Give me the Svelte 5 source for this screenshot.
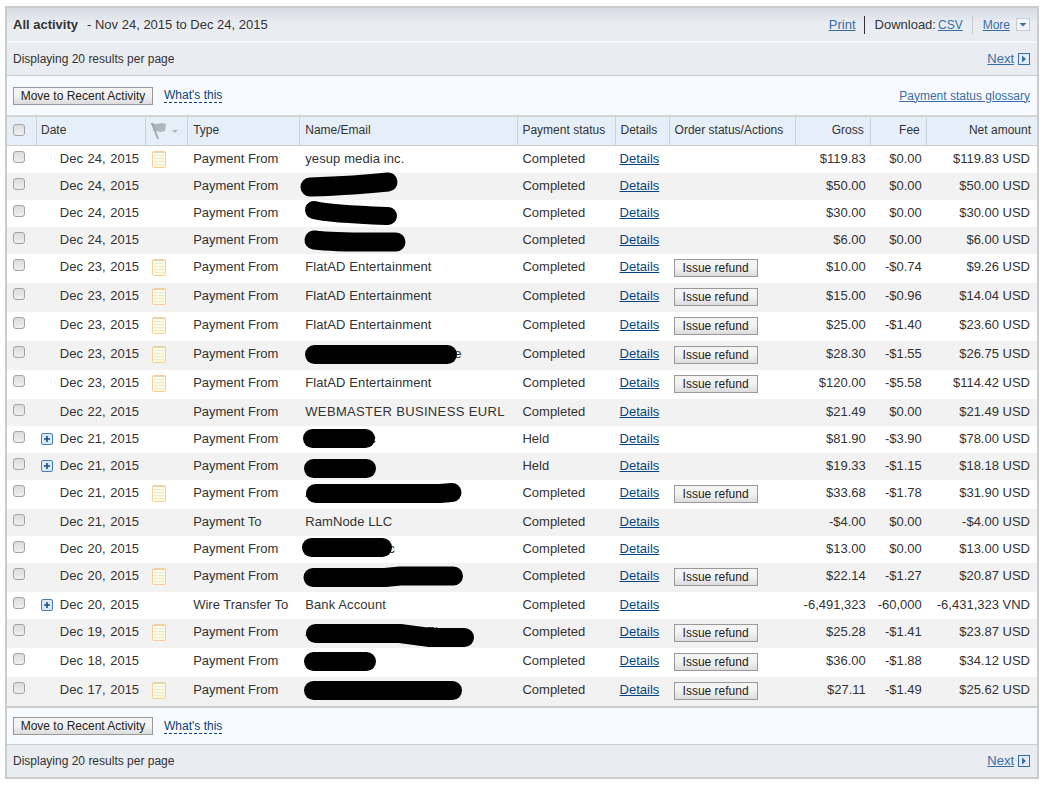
<script>
  const R = (d, t, name, st, ref, g, f, n, o = {}) => ({ d, t, name, st, ref, g, f, n, ...o });
  const F = 'Payment From', C = 'Completed', A = 'FlatAD Entertainment';
  const rows = [
    R('Dec 24, 2015', F, 'yesup media inc.', C, 0, '$119.83', '$0.00', '$119.83 USD', { note: 1 }),
    R('Dec 24, 2015', F, '', C, 0, '$50.00', '$0.00', '$50.00 USD', { blob: 'M10 14 C40 13 70 11 88 9', w: 19 }),
    R('Dec 24, 2015', F, '', C, 0, '$30.00', '$0.00', '$30.00 USD', { blob: 'M14 10 C30 14 60 15 88 16', w: 18 }),
    R('Dec 24, 2015', F, '', C, 0, '$6.00', '$0.00', '$6.00 USD', { blob: 'M14 13 C40 16 70 15 96 15', w: 19 }),
    R('Dec 23, 2015', F, A, C, 1, '$10.00', '-$0.74', '$9.26 USD', { note: 1 }),
    R('Dec 23, 2015', F, A, C, 1, '$15.00', '-$0.96', '$14.04 USD', { note: 1 }),
    R('Dec 23, 2015', F, A, C, 1, '$25.00', '-$1.40', '$23.60 USD', { note: 1 }),
    R('Dec 23, 2015', F, '', C, 1, '$28.30', '-$1.55', '$26.75 USD', { note: 1, blob: 'M14.500 13.500H147.500', w: 19, tail: 'e', tailX: 154 }),
    R('Dec 23, 2015', F, A, C, 1, '$120.00', '-$5.58', '$114.42 USD', { note: 1 }),
    R('Dec 22, 2015', F, 'WEBMASTER BUSINESS EURL', C, 0, '$21.49', '$0.00', '$21.49 USD', { wide: 1 }),
    R('Dec 21, 2015', F, '', 'Held', 0, '$81.90', '-$3.90', '$78.00 USD', { plus: 1, blob: 'M12.500 12.500H65.500', w: 19, tail: 'c', tailX: 69 }),
    R('Dec 21, 2015', F, '', 'Held', 0, '$19.33', '-$1.15', '$18.18 USD', { plus: 1, blob: 'M13.500 15.500H66.500', w: 19 }),
    R('Dec 21, 2015', F, 'A', C, 1, '$33.68', '-$1.78', '$31.90 USD', { note: 1, blob: 'M15.500 13.500H140L152 12.500', w: 19 }),
    R('Dec 21, 2015', 'Payment To', 'RamNode LLC', C, 0, '-$4.00', '$0.00', '-$4.00 USD'),
    R('Dec 20, 2015', F, '', C, 0, '$13.00', '$0.00', '$13.00 USD', { blob: 'M11.500 11.500H82.500', w: 19, tail: 'c', tailX: 88 }),
    R('Dec 20, 2015', F, '', C, 1, '$22.14', '-$1.27', '$20.87 USD', { note: 1, blob: 'M13 14.500H85L100 13H153.500', w: 19 }),
    R('Dec 20, 2015', 'Wire Transfer To', 'Bank Account', C, 0, '-6,491,323', '-60,000', '-6,431,323 VND', { plus: 1 }),
    R('Dec 19, 2015', F, 'A', C, 1, '$25.28', '-$1.41', '$23.87 USD', { note: 1, blob: 'M15.500 14.500H100L130 18.500H164.500', w: 19, tail: 'El', tailX: 126 }),
    R('Dec 18, 2015', F, '', C, 1, '$36.00', '-$1.88', '$34.12 USD', { blob: 'M13.500 13.500H66.500', w: 19 }),
    R('Dec 17, 2015', F, '', C, 1, '$27.11', '-$1.49', '$25.62 USD', { note: 1, blob: 'M13.500 13.500H152.500', w: 19 })
  ];
</script>

{#snippet note()}
  <svg class="note" width="14" height="17" viewBox="0 0 14 17" aria-hidden="true">
    <defs>
      <linearGradient id="notefill" x1="0" y1="0" x2="1" y2="1">
        <stop offset="0" stop-color="#fffef4" />
        <stop offset="1" stop-color="#fdf6d2" />
      </linearGradient>
    </defs>
    <rect x=".5" y=".5" width="13" height="16" rx="1" fill="url(#notefill)" stroke="#f5cf95" />
    <path d="M2 4.500h10M2 7.500h10M2 10.500h10M2 13.500h10" stroke="#e9ebd2" />
    <path d="M1 1.500h12" stroke="#d9d9c8" />
  </svg>
{/snippet}

{#snippet nextIcon()}
  <svg class="next-ico" width="12" height="12" viewBox="0 0 12 12" aria-hidden="true">
    <rect x=".5" y=".5" width="11" height="11" fill="#e4ebf3" stroke="#3a6ea5" />
    <path d="M4 2.500l4 3.500-4 3.500z" fill="#3a6ea5" />
  </svg>
{/snippet}

<div class="panel">
  <div class="bar head">
    <div><b>All activity</b><span class="range">- Nov 24, 2015 to Dec 24, 2015</span></div>
    <div class="tools">
      <a href="#p">Print</a>
      <span class="sep dark"></span>
      <span>Download:</span><a href="#c" class="csv small">CSV</a>
      <span class="sep"></span>
      <a href="#m" class="small">More</a>
      <svg class="more" width="14" height="13" viewBox="0 0 14 13" aria-hidden="true">
        <rect x=".5" y=".5" width="13" height="12" fill="#f2f5f9" stroke="#c4ccd6" />
        <path d="M3.500 5h7L7 8.500z" fill="#3a6ea5" />
      </svg>
    </div>
  </div>
  <div class="bar sub">
    <span class="disp">Displaying 20 results per page</span>
    <span class="next"><a href="#n">Next</a>{@render nextIcon()}</span>
  </div>
  <div class="actions top">
    <button>Move to Recent Activity</button>
    <span class="dashed">What's this</span>
    <a class="gloss" href="#g">Payment status glossary</a>
  </div>

  <table>
    <colgroup>
      <col class="c1" /><col class="c2" /><col class="c3" /><col class="c4" />
      <col class="c5" /><col class="c6" /><col class="c7" /><col class="c8" />
      <col class="c9" /><col class="c10" /><col class="c11" />
    </colgroup>
    <thead>
      <tr>
        <th><span class="cb"></span></th>
        <th class="snug">Date</th>
        <th class="flag">
          <svg width="34" height="20" viewBox="0 0 34 20" aria-hidden="true">
            <path d="M2 2l6 1 4-1 5 1-1 7-5 1-4-1-2 0z" fill="#b0b5ba" />
            <path d="M3 2l6 16" stroke="#a4a9ae" stroke-width="2" />
            <path d="M23 9h6l-3 3z" fill="#b3b3b3" />
          </svg>
        </th>
        <th>Type</th>
        <th>Name/Email</th>
        <th class="snug">Payment status</th>
        <th>Details</th>
        <th>Order status/Actions</th>
        <th class="num">Gross</th>
        <th class="num">Fee</th>
        <th class="num last">Net amount</th>
      </tr>
    </thead>
    <tbody>
      {#each rows as r}
        <tr class:tall={r.ref}>
          <td><span class="cb"></span></td>
          <td class="date">
            {#if r.plus}
              <svg class="plus" width="12" height="12" viewBox="0 0 12 12" aria-hidden="true">
                <rect x=".5" y=".5" width="11" height="11" rx="1.500" fill="#dbe8f5" stroke="#4a7fb5" />
                <path d="M3 6h6M6 3v6" stroke="#1c4f87" stroke-width="1.600" />
              </svg>
            {/if}
            {r.d}
          </td>
          <td class="nt">{#if r.note}{@render note()}{/if}</td>
          <td>{r.t}</td>
          <td class="name" class:wide={r.wide}>
            {r.name}
            {#if r.tail}<span class="tail" style="left:{r.tailX}px">{r.tail}</span>{/if}
            {#if r.blob}
              <svg class="blob" width="180" height="27" viewBox="0 0 180 27" aria-hidden="true">
                <path d={r.blob} fill="none" stroke="#000" stroke-width={r.w} stroke-linecap="round" stroke-linejoin="round" />
              </svg>
            {/if}
          </td>
          <td class="tight">{r.st}</td>
          <td class="tight"><a href="#d">Details</a></td>
          <td class="tight">{#if r.ref}<button class="refund">Issue refund</button>{/if}</td>
          <td class="num">{r.g}</td>
          <td class="num">{r.f}</td>
          <td class="num last">{r.n}</td>
        </tr>
      {/each}
    </tbody>
  </table>

  <div class="actions bottom">
    <button>Move to Recent Activity</button>
    <span class="dashed">What's this</span>
  </div>
  <div class="bar foot">
    <span class="disp">Displaying 20 results per page</span>
    <span class="next"><a href="#n">Next</a>{@render nextIcon()}</span>
  </div>
</div>

<style>
  :global(body) { margin: 0; background: #fff; }
  .panel {
    box-sizing: border-box;
    width: 1034px;
    height: 773px;
    margin: 6px 0 0 5px;
    border: 2px solid #ccc;
    font: 13px/16px "Liberation Sans", Arial, sans-serif;
    color: #333;
    display: flex;
    flex-direction: column;
  }
  a { color: #084482; text-decoration: underline; }
  .bar {
    display: flex;
    justify-content: space-between;
    align-items: center;
    box-sizing: border-box;
    padding: 0 7px 0 6px;
    background: #e9ecf1;
    flex: none;
  }
  .bar a { color: #3a6ea5; }
  .disp { font-size: 12px; }
  .head {
    height: 35px;
    background: linear-gradient(#d6dbe3, #e9ecf1 45%);
    border-bottom: 2px solid #f4f6f8;
  }
  .head b { color: #333; }
  .range { margin-left: 9px; }
  .tools { display: flex; align-items: center; }
  .small { font-size: 12px; }
  .sep { width: 1px; height: 18px; background: #ccc; margin: 0 10px 0 9px; }
  .sep.dark { background: #333; margin-left: 8px; }
  .csv { margin-left: 2px; }
  .more { margin-left: 6px; }
  .sub { height: 33px; border-bottom: 1px solid #ccc; }
  .foot { flex: 1; }
  .next { display: flex; align-items: center; gap: 4px; }
  .actions {
    display: flex;
    align-items: center;
    box-sizing: border-box;
    background: #f7fbff;
    padding: 0 7px 0 6px;
    flex: none;
  }
  .top { height: 41px; border-bottom: 2px solid #d5d5d5; }
  .bottom { height: 39px; border-top: 2px solid #ccc; border-bottom: 1px solid #ccc; }
  button {
    box-sizing: border-box;
    height: 18px;
    width: 140px;
    padding: 0;
    border: 1px solid #999;
    background: linear-gradient(#f4f4f4 45%, #dcdcdc);
    font: 12px/16px "Liberation Sans", Arial, sans-serif;
    color: #222;
  }
  .dashed { margin-left: 11px; color: #084482; font-size: 12px; border-bottom: 1px dashed #084482; line-height: 14px; }
  .gloss { margin-left: auto; font-size: 12px; color: #3a6ea5; }
  table { border-collapse: separate; border-spacing: 0; table-layout: fixed; width: 1030px; flex: none; }
  .c1 { width: 30px; }
  .c2 { width: 109px; }
  .c3 { width: 42px; }
  .c4 { width: 112px; }
  .c5 { width: 218px; }
  .c6 { width: 97px; }
  .c7 { width: 54px; }
  .c8 { width: 126px; }
  .c9 { width: 75px; }
  .c10 { width: 56px; }
  .c11 { width: 110px; }
  th {
    height: 29px;
    padding: 0 0 3px 5px;
    box-sizing: border-box;
    background: #e6eef8;
    font: 12px/16px "Liberation Sans", Arial, sans-serif;
    color: #333;
    text-align: left;
    border-right: 1px solid #ccd3dc;
    border-bottom: 1px solid #ccc;
    white-space: nowrap;
  }
  th:first-child { padding-left: 6px; }
  th.snug { padding-left: 4px; }
  th.num { text-align: right; padding-right: 6px; }
  th.last { border-right: 0; }
  th.flag { padding: 0 0 0 3px; line-height: 0; }
  td {
    padding: 5px 0 0 5px;
    height: 27px;
    box-sizing: border-box;
    vertical-align: top;
    white-space: nowrap;
  }
  td.tight { padding-left: 4px; }
  tr.tall td { height: 29px; }
  tbody tr:nth-child(even) td { background: #f2f2f2; }
  .cb {
    display: block;
    box-sizing: border-box;
    width: 12px;
    height: 12px;
    border: 1px solid #a4a4a4;
    border-radius: 3px;
    background: linear-gradient(#dcdcdc, #efefef);
  }
  td:first-child { padding-left: 6px; }
  td.date { text-align: right; padding: 5px 7px 0 0; position: relative; word-spacing: 1px; }
  .plus { position: absolute; left: 4px; top: 7px; }
  td.nt { padding: 5px 0 0 6px; }
  .note { display: block; }
  .name { position: relative; letter-spacing: .1px; }
  .wide { letter-spacing: .35px; }
  .blob { position: absolute; left: 0; top: 0; overflow: visible; z-index: 1; }
  .tail { position: absolute; top: 5px; }
  td.num { text-align: right; padding-right: 5px; }
  td.num.last { padding-right: 7px; }
  .refund { display: block; width: 84px; }
</style>
